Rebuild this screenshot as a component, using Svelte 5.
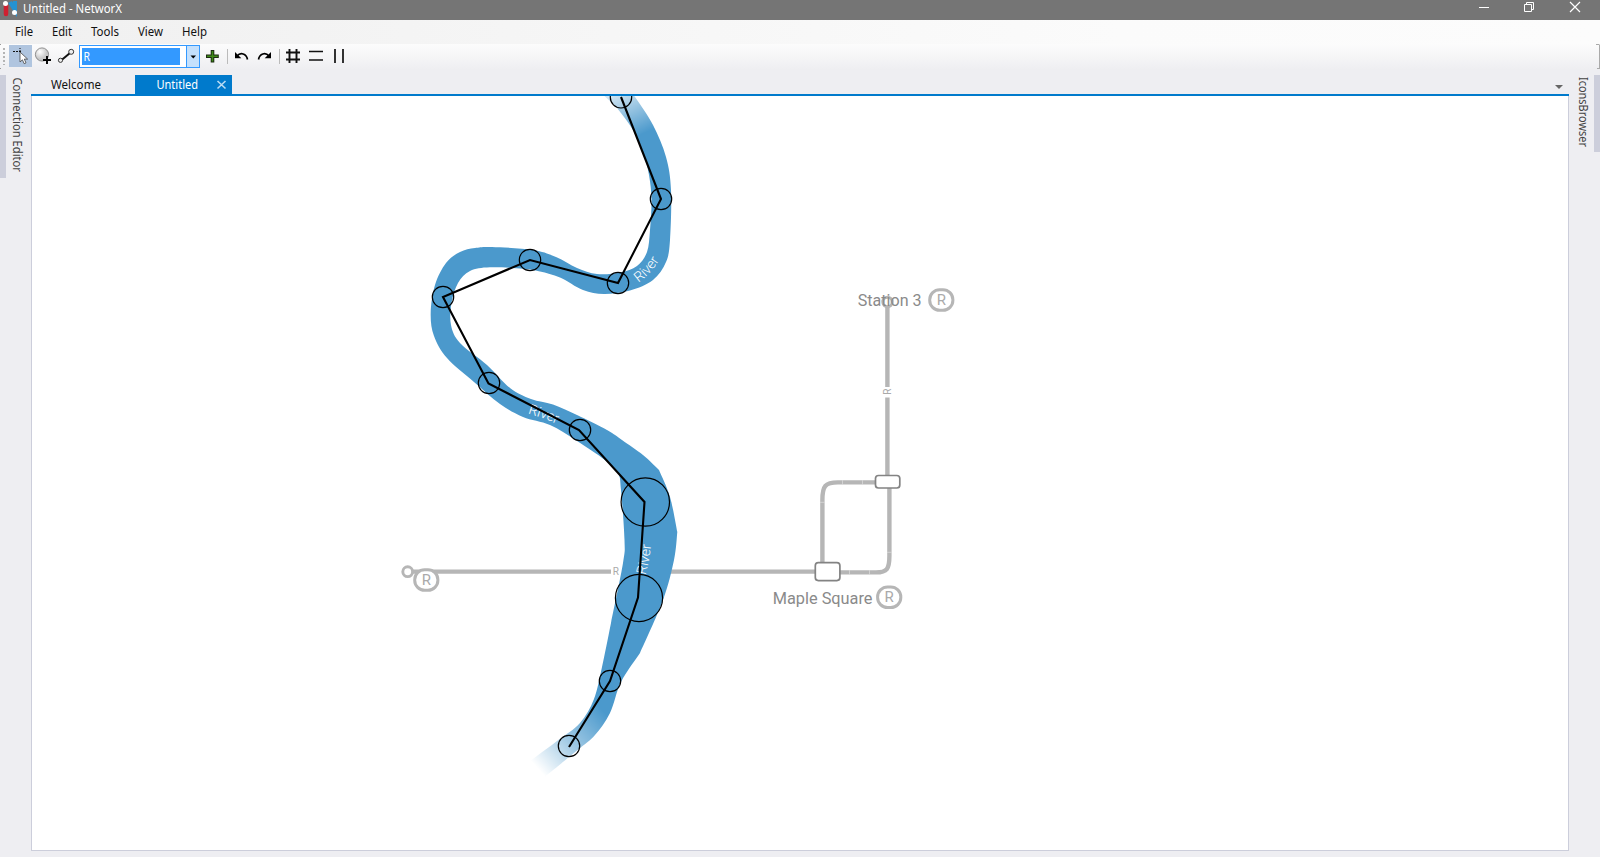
<script>
  const menus = [
    { label: 'File', w: 37, tl: 18 },
    { label: 'Edit', w: 39, tl: 20 },
    { label: 'Tools', w: 47, tl: 28 },
    { label: 'View', w: 44, tl: 25 },
    { label: 'Help', w: 44, tl: 25 },
  ];

  const nodes = [
    [621, 97.3, 10.7], [661, 199, 10.7], [618, 283, 10.7], [530, 260, 10.7],
    [443, 297, 10.7], [489, 383, 10.7], [580, 430, 10.7], [645.3, 502, 24.2],
    [639, 598, 23.6], [610, 681, 10.7], [569, 746, 10.7],
  ];
  const spine = '621,97 661,199 618,283 530,260 443,297 488.5,383.5 579,430 644.5,502 638,597.5 610,681 569,747';

  const bank = [
    [620, 78], [635, 97], [653, 125], [666, 157], [671, 190], [670, 240], [666, 262], [653, 280], [630, 290.5],
    [604, 294], [583, 290], [560, 277.5], [540, 271.5], [523, 268.7], [490, 267.3], [470, 271], [458, 283],
    [451.5, 303], [451, 325], [460, 343], [487, 365], [510, 388], [531, 399], [553, 404.5], [577, 415],
    [607, 430], [622, 440], [643, 455], [659, 470], [659, 470], [670, 497], [677.3, 532], [677.3, 532],
    [674, 560], [663, 600], [640, 653], [640, 653], [621, 682], [610, 713], [595, 735], [577, 750.5], [541, 780],
    [541, 780], [525, 765], [525, 765], [557, 741], [580, 723], [594, 699], [602, 667], [611, 623], [623, 563],
    [624.5, 540], [621, 490], [618, 473], [605, 460], [577, 441], [550, 425], [523, 417], [500, 404],
    [474, 382], [447, 358], [434, 336], [430.7, 313], [435, 285], [446, 263], [460, 252], [475, 248],
    [492, 247], [533, 250], [556, 257], [577, 268], [597, 274], [620, 272.5], [637, 266], [647, 252],
    [650, 230], [651.5, 200], [649, 175], [643, 152], [633, 130], [617, 108], [598, 87],
  ];

  function smooth(p) {
    const n = p.length;
    let d = `M${p[0]}`;
    for (let i = 0; i < n; i++) {
      const a = p[(i + n - 1) % n], b = p[i], c = p[(i + 1) % n], e = p[(i + 2) % n];
      if (b[0] === c[0] && b[1] === c[1]) continue;
      d += `C${b[0] + (c[0] - a[0]) / 6},${b[1] + (c[1] - a[1]) / 6} ${c[0] - (e[0] - b[0]) / 6},${c[1] - (e[1] - b[1]) / 6} ${c[0]},${c[1]}`;
    }
    return d + 'Z';
  }
  const river = smooth(bank);
  const badges = [[941.3, 300], [889.2, 597.3], [426.3, 580]];
</script>

<div class="app">
  <header class="title">
    <svg class="logo" width="16" height="20" viewBox="0 0 16 20">
      <path d="M5 5V14" stroke="#cf2030" stroke-width="4.5" stroke-linecap="round" />
      <path d="M9 2L14 10V1" stroke="#2492d2" stroke-width="4.2" fill="none" />
      <circle cx="4.5" cy="3.5" r="2.5" fill="#fff" /><circle cx="13.5" cy="12.5" r="2.5" fill="#fff" />
    </svg>
    <svg class="txt" width="110" height="20"><text x="0" y="13" textLength="99" lengthAdjust="spacingAndGlyphs" fill="#fff">Untitled - NetworX</text></svg>
    <div class="winbtns">
      <svg width="45" height="20"><path d="M14 7.5h10" stroke="#fff" /></svg>
      <svg width="45" height="20"><path d="M14.5 4.5h7v7h-7zM16.5 4.500v-2h7v7h-2" stroke="#fff" fill="none" /></svg>
      <svg width="45" height="20"><path d="M15 2l10 10M25 2l-10 10" stroke="#fff" stroke-width="1.200" /></svg>
    </div>
  </header>

  <nav class="menu">
    {#each menus as m}
      <svg class="txt" width={m.w} height="24"><text x="0" y="16" textLength={m.tl} lengthAdjust="spacingAndGlyphs" fill="#111">{m.label}</text></svg>
    {/each}
  </nav>

  <div class="tools">
    <svg class="grip" width="9" height="26"><path d="M4 4v17" stroke="#b4b4b4" stroke-width="2" stroke-dasharray="2 2" /><path d="M0 .5h1M0 24.500h1" stroke="#999" /></svg>
    <div class="picked">
      <svg width="23" height="22"><path d="M4 6.500h8" stroke="#111" stroke-dasharray="2 1" /><path d="M11 3v3" stroke="#111" stroke-dasharray="1 1" /><path d="M11 7v10l2.400-2.200 1.800 3.900 1.800-.8-1.700-3.800h3.300z" fill="#fff" stroke="#444" stroke-width=".8" /></svg>
    </div>
    <svg width="23" height="22">
      <defs><radialGradient id="ball" cx=".35" cy=".3"><stop offset="0" stop-color="#fff" /><stop offset="1" stop-color="#c9c9c9" /></radialGradient></defs>
      <circle cx="10" cy="9.500" r="6.600" fill="url(#ball)" stroke="#777" stroke-width=".8" /><path d="M15 11v8M11 15h8" stroke="#000" stroke-width="1.900" />
    </svg>
    <svg width="24" height="22"><path d="M6 15.500L15 8" stroke="#111" stroke-width="2" /><circle cx="5.500" cy="15.300" r="2.100" fill="#eee" stroke="#222" stroke-width=".9" /><circle cx="16.200" cy="6.800" r="2.500" fill="#eee" stroke="#222" stroke-width=".9" /></svg>
    <div class="combo">
      <div class="value"><svg class="txt" width="20" height="17"><text x="1.500" y="13" textLength="6.500" lengthAdjust="spacingAndGlyphs" fill="#fff">R</text></svg></div>
      <div class="drop"><svg width="12" height="21"><path d="M3.500 9.500h5.500l-2.700 3z" fill="#000" /></svg></div>
    </div>
    <svg width="27" height="22"><path d="M12.500 5v12.500M6 11.200h12.800" stroke="#1c2b12" stroke-width="3.600" /><path d="M12.500 6v10.500M7 11.200h10.800" stroke="#3f8a18" stroke-width="1.600" /></svg>
    <i class="sep"></i>
    <svg width="24" height="22"><path d="M9 11c3.500-4 9.500-2.500 10.500 3.500" fill="none" stroke="#000" stroke-width="1.700" /><path d="M7 7v6.300h6.300z" fill="#000" /></svg>
    <svg width="27" height="22"><path d="M17 11c-3.500-4-9.500-2.500-10.500 3.500" fill="none" stroke="#000" stroke-width="1.700" /><path d="M19 7v6.300h-6.300z" fill="#000" /></svg>
    <i class="sep"></i>
    <svg width="25" height="22"><path d="M9.500 4v14M16.500 4v14M6 7.500h14M6 14.500h14" stroke="#111" stroke-width="1.900" /></svg>
    <svg width="25" height="22"><path d="M4 6.500h14M4 15h14" stroke="#111" stroke-width="1.600" /></svg>
    <svg width="20" height="22"><path d="M5 4v14M13 4v14" stroke="#111" stroke-width="1.700" /></svg>
    <svg class="over" width="4" height="26"><path d="M0 .5h3.500M3.500 1v23M1 24.500h3" stroke="#aaa" fill="none" /></svg>
  </div>

  <main class="body">
    <aside class="left">
      <div class="bar"></div>
      <svg class="txt" width="25" height="110"><text transform="translate(7 2.500) rotate(90)" textLength="94.500" lengthAdjust="spacingAndGlyphs" fill="#444">Connection Editor</text></svg>
    </aside>
    <section class="doc">
      <div class="tabs">
        <svg class="txt tab" width="104" height="19"><text x="20" y="14" textLength="50" lengthAdjust="spacingAndGlyphs" fill="#111">Welcome</text></svg>
        <div class="active">
          <svg class="txt" width="97" height="19"><text x="21.500" y="14" textLength="41.500" lengthAdjust="spacingAndGlyphs" fill="#fff">Untitled</text><path d="M82.500 6l8 7.500M90.500 6l-8 7.500" stroke="#b9dcf4" stroke-width="1.600" /></svg>
        </div>
        <svg class="more" width="20" height="19"><path d="M6 10h8l-4 4z" fill="#666" /></svg>
      </div>
      <div class="canvas">
        <svg width="1536" height="754" viewBox="32 96 1536 754" font-family="Roboto, sans-serif">
          <defs>
            <linearGradient id="topFade" gradientUnits="userSpaceOnUse" x1="611" y1="78" x2="638" y2="136">
              <stop offset="0" stop-color="#fff" stop-opacity="0" /><stop offset=".3" stop-color="#fff" stop-opacity=".3" /><stop offset="1" stop-color="#fff" />
            </linearGradient>
            <linearGradient id="endFade" gradientUnits="userSpaceOnUse" x1="539" y1="770" x2="604" y2="712">
              <stop offset="0" stop-color="#fff" stop-opacity="0" /><stop offset=".5" stop-color="#fff" stop-opacity=".55" /><stop offset="1" stop-color="#fff" />
            </linearGradient>
            <mask id="fade" maskUnits="userSpaceOnUse" x="400" y="70" width="300" height="730">
              <rect x="400" y="70" width="300" height="530" fill="url(#topFade)" />
              <rect x="400" y="600" width="300" height="200" fill="url(#endFade)" />
            </mask>
            <path id="bend" d="M638.500 282.500Q653 273 664 252" />
            <path id="mid" d="M528 413.500Q544 418 562 426" />
            <path id="low" d="M645.500 575Q650 560 652 536" />
          </defs>

          <g fill="none" stroke="#b6b6b6" stroke-width="4.400">
            <path d="M412 571.600H611M626 571.600H816" />
            <path d="M887.400 305V387M887.400 397.500V477" />
            <path d="M822.400 564V500C822.400 486 825 482.400 838 482.400H877" />
            <path d="M889.400 487V556C889.400 569 887 572.400 876 572.400H838" />
            <circle cx="407.700" cy="571.700" r="4.900" stroke-width="2.900" fill="#fff" />
            <circle cx="887.500" cy="302" r="4.700" stroke-width="3" fill="#fff" />
          </g>
          <path d="M842.500 480v5M862.500 480v5M820 502.300h5M849.500 570v5M869.500 570v5M887 552.300h5" stroke="#ddd" stroke-width=".7" />
          <g fill="#fff" stroke="#838383" stroke-width="1.700">
            <rect x="875.500" y="475.500" width="24.300" height="12.500" rx="3" />
            <rect x="815.300" y="562.700" width="24.600" height="17.900" rx="3" />
          </g>
          <g fill="#aaa" font-size="10">
            <text x="612.800" y="575">R</text>
            <text transform="translate(891 394.700) rotate(-90)">R</text>
          </g>
          {#each badges as [x, y]}
            <rect x={x - 11.6} y={y - 10.3} width="23.200" height="20.600" rx="10" fill="#fff" stroke="#b6b6b6" stroke-width="3" />
            <text {x} y={y + 5} font-size="15" text-anchor="middle" fill="#aaa">R</text>
          {/each}
          <g fill="#8a8a8a" font-size="16">
            <text x="857.800" y="305.900" textLength="63.800" lengthAdjust="spacingAndGlyphs">Station 3</text>
            <text x="772.700" y="604" textLength="99.800" lengthAdjust="spacingAndGlyphs">Maple Square</text>
          </g>

          <path d={river} fill="#4b99cc" mask="url(#fade)" />
          <g fill="#fff" font-size="14" font-weight="300">
            <text><textPath href="#bend">River</textPath></text>
            <text><textPath href="#mid">River</textPath></text>
            <text><textPath href="#low">River</textPath></text>
          </g>
          <g fill="none" stroke="#000">
            <polyline points={spine} stroke-width="2.100" />
            {#each nodes as [x, y, r]}
              <circle cx={x} cy={y} {r} stroke-width="1.200" />
            {/each}
          </g>
        </svg>
      </div>
    </section>
    <aside class="right">
      <svg class="txt" width="25" height="90"><text transform="translate(9.500 2) rotate(90)" textLength="70" lengthAdjust="spacingAndGlyphs" fill="#444">IconsBrowser</text></svg>
      <div class="bar short"></div>
    </aside>
  </main>
</div>

<style>
  :global(body) { margin: 0; overflow: hidden; }
  .app { width: 1600px; height: 857px; display: flex; flex-direction: column; background: #eeeef2; font-family: "Noto Sans", "Open Sans", sans-serif; font-size: 12px; }
  svg { display: block; flex: none; }
  .txt { overflow: visible; }
  .title { height: 20px; background: #757575; display: flex; }
  .logo { margin: 0 5px 0 1px; }
  .title .txt { margin-left: 1px; }
  .winbtns { margin-left: auto; display: flex; }
  .menu { height: 24px; display: flex; padding-left: 15px; background: linear-gradient(90deg, #f0f0f0, #fbfbfb 70%, #fcfcfc); }
  .tools { height: 26px; display: flex; align-items: flex-start; background: linear-gradient(#fcfcfc, #eeeef1); }
  .tools > svg:not(.grip):not(.over) { margin-top: 1px; }
  .picked { width: 23px; height: 22px; margin-top: 1px; background: #b0c5df; }
  .combo { box-sizing: border-box; width: 121px; height: 23px; margin-top: 1px; border: 1px solid #3399ff; background: #fff; display: flex; }
  .value { width: 98px; height: 17px; margin: 2px 0 0 2px; background: #3399ff; }
  .drop { margin-left: auto; height: 21px; border-left: 1px solid #3399ff; background: #c4e0fc; }
  .sep { width: 1px; height: 15px; margin-top: 5px; background: #bbb; }
  .over { margin-left: auto; }
  .body { flex: 1; display: flex; }
  .left, .right { display: flex; padding-top: 5px; box-sizing: border-box; width: 31px; align-items: flex-start; }
  .bar { width: 6px; height: 103px; background: #ccceDb; }
  .short { height: 77px; }
  .doc { width: 1538px; padding-top: 5px; display: flex; flex-direction: column; }
  .tabs { height: 19px; display: flex; border-bottom: 2px solid #007acc; }
  .active { background: #007acc; }
  .more { margin-left: auto; }
  .canvas { height: 754px; width: 1536px; border: 1px solid #ccceDb; border-top: 0; background: #fff; overflow: hidden; }
</style>
